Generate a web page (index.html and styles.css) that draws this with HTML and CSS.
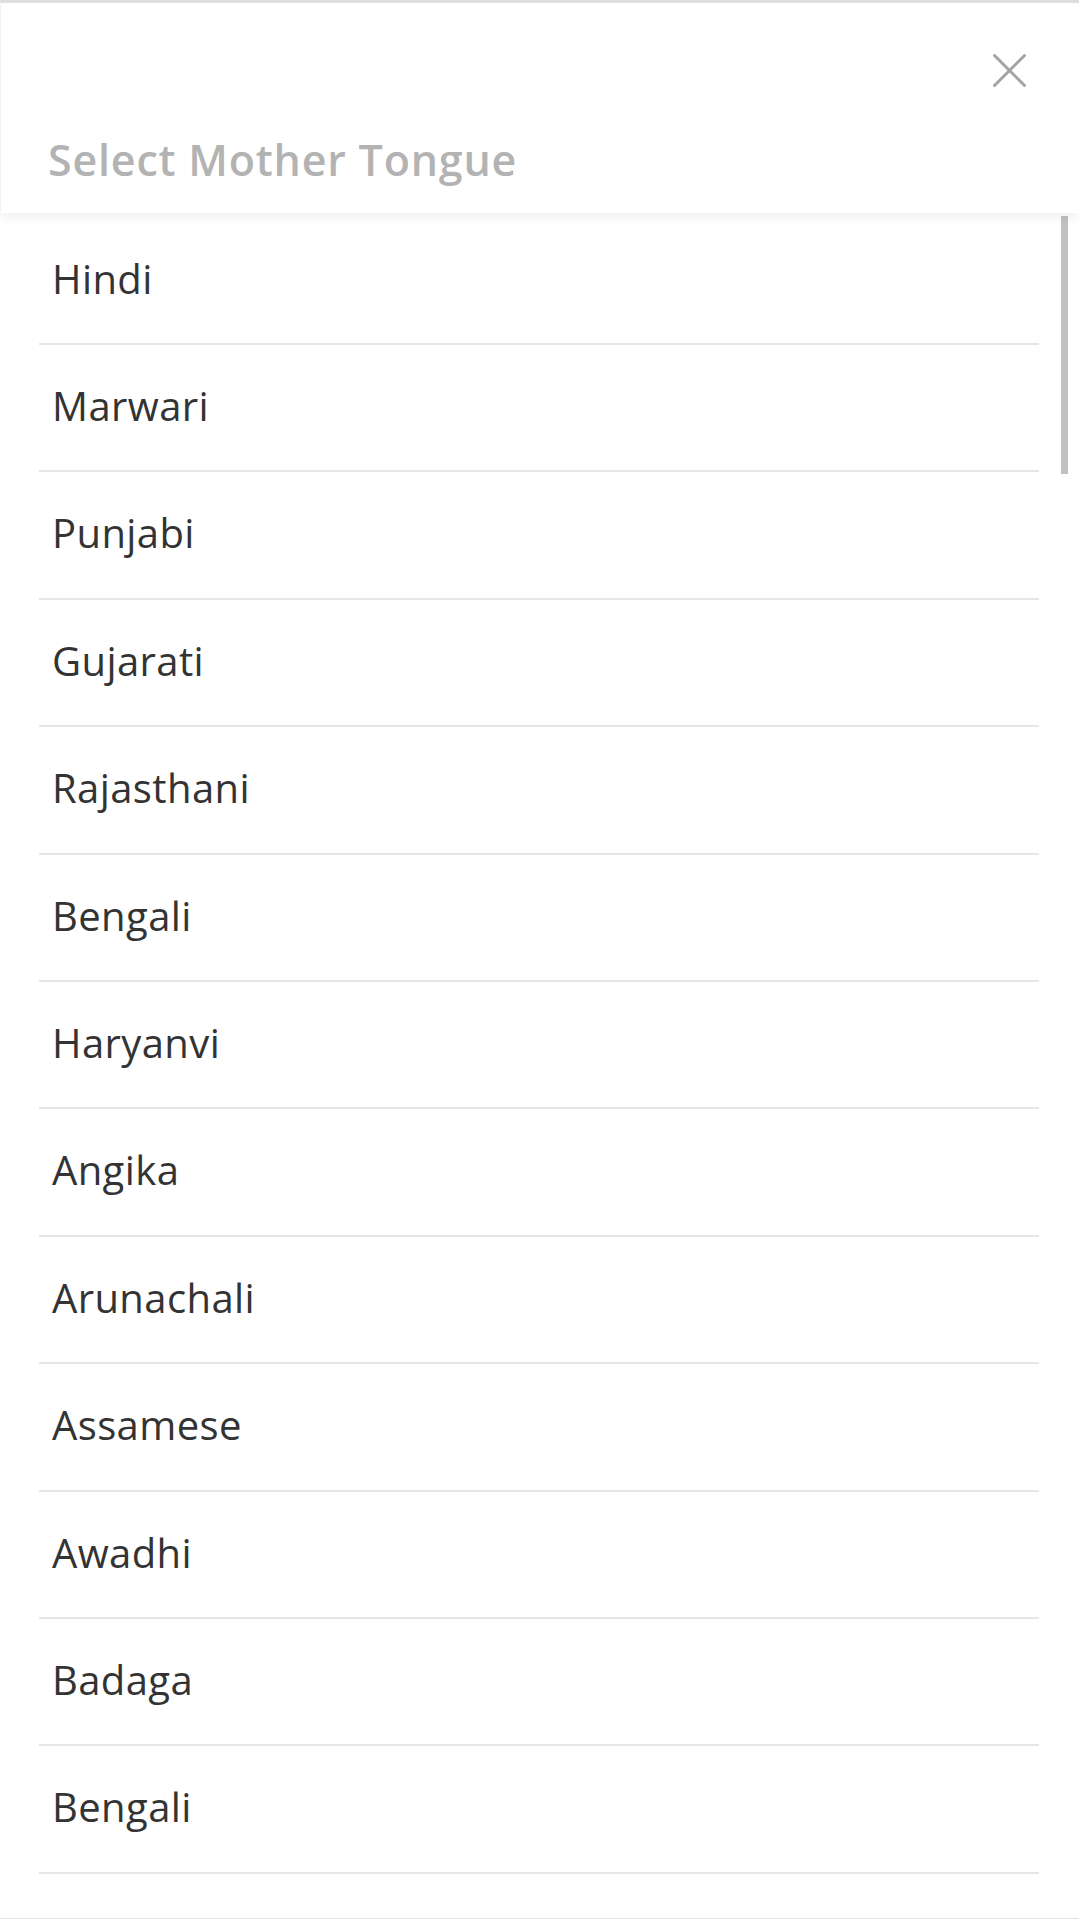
FILE: index.html
```html
<!DOCTYPE html>
<html lang="en">
<head>
<meta charset="utf-8">
<title>Select Mother Tongue</title>
<link rel="stylesheet" href="styles.css">
</head>
<body>
<div class="page">
  <header class="header">
    <div class="close-row">
      <button class="close" aria-label="Close">
        <svg width="35" height="35" viewBox="0 0 35 35">
          <path d="M2.5 2.5 L32.5 32.5 M32.5 2.5 L2.5 32.5" stroke="#a3a3a3" stroke-width="3" stroke-linecap="round" fill="none"/>
        </svg>
      </button>
    </div>
    <h1 class="title">Select Mother Tongue</h1>
  </header>
  <div class="list-wrap">
    <ul class="list">
      <li class="item">Hindi</li>
      <li class="item">Marwari</li>
      <li class="item">Punjabi</li>
      <li class="item">Gujarati</li>
      <li class="item">Rajasthani</li>
      <li class="item">Bengali</li>
      <li class="item">Haryanvi</li>
      <li class="item">Angika</li>
      <li class="item">Arunachali</li>
      <li class="item">Assamese</li>
      <li class="item">Awadhi</li>
      <li class="item">Badaga</li>
      <li class="item">Bengali</li>
    </ul>
    <div class="scrollbar"></div>
  </div>
</div>
</body>
</html>
```
FILE: styles.css
```css
* { box-sizing: border-box; }
html, body { margin: 0; padding: 0; background: #fff; }
body { font-family: "Open Sans", "DejaVu Sans", sans-serif; }

.page {
  width: 1079px;
  height: 1919px;
  display: flex;
  flex-direction: column;
  border-bottom: 1px solid #e2e2e2;
  overflow: hidden;
}

.header {
  position: relative;
  z-index: 2;
  background: #fff;
  border-top: 3px solid #dedede;
  border-left: 1px solid #f2f2f2;
  height: 213px;
  flex: 0 0 auto;
  padding: 50px 52px 0 47px;
  box-shadow: 0 5px 10px rgba(0, 0, 0, 0.06);
}

.close-row {
  display: flex;
  justify-content: flex-end;
}

.close {
  width: 35px;
  height: 35px;
  padding: 0;
  border: 0;
  background: none;
  display: block;
}
.close svg { display: block; }

.title {
  margin: 46px 0 0 0;
  font-size: 43px;
  line-height: 52px;
  font-weight: 600;
  color: #b3b3b3;
  letter-spacing: 0.8px;
}

.list-wrap {
  position: relative;
  flex: 1 1 auto;
  overflow: hidden;
}

.list {
  list-style: none;
  margin: 0;
  padding: 4.6px 40px 0 39px;
}

.item {
  height: 127.4px;
  padding: 36px 0 0 13px;
  font-size: 40px;
  line-height: 50px;
  letter-spacing: 0.4px;
  color: #333333;
  border-bottom: 2px solid #e6e6e6;
}

.scrollbar {
  position: absolute;
  top: 3px;
  left: 1061px;
  width: 7px;
  height: 258px;
  background: #c1c1c1;
}
```
